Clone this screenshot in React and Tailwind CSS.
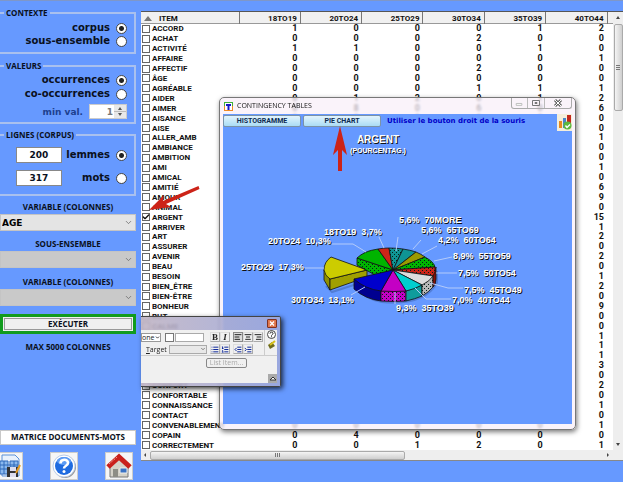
import React from 'react';
import clsx from 'clsx';
import { Check, ChevronDown, List, ListOrdered, AlignLeft, AlignCenter, AlignRight, IndentDecrease, IndentIncrease } from 'lucide-react';

const COLUMNS = ['18TO19', '20TO24', '25TO29', '30TO34', '35TO39', '40TO44'];

const ROWS = [
    ['ACCORD', 1, 0, 0, 0, 1, 2],
    ['ACHAT', 0, 0, 0, 2, 0, 0],
    ['ACTIVITÉ', 1, 1, 0, 0, 1, 0],
    ['AFFAIRE', 0, 0, 0, 0, 0, 1],
    ['AFFECTIF', 0, 0, 0, 2, 0, 0],
    ['ÂGE', 0, 0, 0, 0, 0, 0],
    ['AGRÉABLE', 0, 0, 0, 1, 1, 1],
    ['AIDER', 0, 1, 2, 0, 1, 2],
    ['AIMER', 0, 8, 0, 6, 0, 6],
    ['AISANCE', 0, 0, 0, 0, 0, 0],
    ['AISE', 0, 0, 0, 0, 0, 0],
    ['ALLER_AMB', 0, 0, 0, 0, 0, 1],
    ['AMBIANCE', 0, 0, 0, 0, 0, 0],
    ['AMBITION', 0, 0, 0, 0, 0, 0],
    ['AMI', 0, 0, 0, 0, 0, 1],
    ['AMICAL', 0, 0, 0, 0, 0, 0],
    ['AMITIÉ', 0, 0, 0, 0, 0, 6],
    ['AMOUR', 0, 0, 0, 0, 0, 9],
    ['ANIMAL', 0, 0, 0, 0, 0, 0],
    ['ARGENT', 0, 0, 0, 0, 0, 15],
    ['ARRIVER', 0, 0, 0, 0, 0, 1],
    ['ART', 0, 0, 0, 0, 0, 2],
    ['ASSURER', 0, 0, 0, 0, 0, 0],
    ['AVENIR', 0, 0, 0, 0, 0, 2],
    ['BEAU', 0, 0, 0, 0, 0, 0],
    ['BESOIN', 0, 0, 0, 0, 0, 1],
    ['BIEN_ÊTRE', 0, 0, 0, 0, 0, 2],
    ['BIEN-ÊTRE', 0, 0, 0, 0, 0, 0],
    ['BONHEUR', 0, 0, 0, 0, 0, 9],
    ['BUT', 0, 0, 0, 0, 0, 0],
    ['CALME', 0, 0, 0, 0, 0, 0],
    ['CHANCE', 0, 0, 0, 0, 0, 1],
    ['CHOIX', 0, 0, 0, 0, 0, 1],
    ['COEUR', 0, 0, 0, 0, 0, 1],
    ['COMPLET', 0, 0, 0, 0, 0, 3],
    ['COMPTER', 0, 0, 0, 0, 0, 0],
    ['CONFORT', 0, 0, 0, 0, 0, 2],
    ['CONFORTABLE', 0, 0, 0, 0, 0, 0],
    ['CONNAISSANCE', 0, 0, 0, 0, 0, 1],
    ['CONTACT', 0, 0, 0, 0, 0, 0],
    ['CONVENABLEMENT', 0, 0, 0, 0, 0, 1],
    ['COPAIN', 0, 4, 0, 0, 0, 0],
    ['CORRECTEMENT', 0, 0, 1, 2, 0, 1],
];

const PIE_LABELS = [
    [324, 235, '18TO19', '3,7%'],
    [268, 244, '20TO24', '10,3%'],
    [241, 270, '25TO29', '17,3%'],
    [291, 303, '30TO34', '13,1%'],
    [399, 223, '5,6%', '70MORE'],
    [421, 233, '5,6%', '65TO69'],
    [438, 243, '4,2%', '60TO64'],
    [453, 259, '8,9%', '55TO59'],
    [458, 276, '7,5%', '50TO54'],
    [464, 293, '7,5%', '45TO49'],
    [452, 303, '7,0%', '40TO44'],
    [396, 311, '9,3%', '35TO39'],
];

const Group = ({ title, children, className }) => (
    <fieldset className={clsx('min-w-0 border-2 border-l-0 border-[#a9c0ee] pr-[7px]', className)}>
        <legend className="ml-[4px] px-[2px] font-['Open_Sans'] text-[8px] leading-[10px]">{title}</legend>
        {children}
    </fieldset>
);

const Choice = ({ label, name, checked }) => (
    <label className="flex items-center justify-end gap-[6px] text-[10px] leading-[12px]">
        {label}
        <input
            type="radio"
            name={name}
            defaultChecked={checked}
            className="size-[11px] appearance-none rounded-full border border-[#444] bg-white checked:bg-[radial-gradient(#222_0_2px,#fff_3px)]"
        />
    </label>
);

const Combo = ({ id, label, value, className }) => (
    <div className={className}>
        <label htmlFor={id} className="block text-center font-['Open_Sans'] text-[8px] leading-[14px]">{label}</label>
        <div className="grid items-center">
            <select
                id={id}
                disabled={!value}
                className="col-start-1 row-start-1 h-[17px] w-full appearance-none border border-[#c4c4c4] bg-[#e4e4e4] pl-[1px] text-[9px] leading-[12px] font-bold text-black disabled:bg-[#c9c9c9]"
            >
                <option>{value}</option>
            </select>
            <ChevronDown size={9} className="pointer-events-none col-start-1 row-start-1 mr-[3px] justify-self-end text-[#666]" />
        </div>
    </div>
);

const Sidebar = () => (
    <aside className="flex w-[141px] shrink-0 flex-col pt-[7px] pr-[5px] font-['DejaVu_Sans',sans-serif] font-bold text-[#0a1020]">
        <Group title="CONTEXTE" className="h-[46px]">
            <div className="flex flex-col gap-[1px] pt-[4px]">
                <Choice name="contexte" label="corpus" checked />
                <Choice name="contexte" label="sous-ensemble" />
            </div>
        </Group>
        <Group title="VALEURS" className="mt-[7px] h-[63px]">
            <div className="flex flex-col gap-[2px] pt-[3px]">
                <Choice name="valeurs" label="occurrences" checked />
                <Choice name="valeurs" label="co-occurrences" />
                <label className="flex items-center justify-end gap-[6px] pt-[2px] text-[9px] leading-[12px] text-[#1d3f8f]">
                    min val.
                    <span className="flex h-[15px] w-[38px] border border-[#ccc] bg-white">
                        <input type="text" defaultValue="1" className="w-[23px] text-right text-[9px] text-[#777]" />
                        <svg viewBox="0 0 12 13" className="ml-auto h-[13px] w-[12px] bg-[#e8e8e8]">
                            <path d="M4 5h4L6 2zM4 8h4l-2 3z" fill="#555" />
                            <path d="M0 6.5h12" stroke="#bbb" />
                        </svg>
                    </span>
                </label>
            </div>
        </Group>
        <Group title="LIGNES (CORPUS)" className="mt-[6px] h-[66px]">
            <div className="flex flex-col gap-[7px] pt-[7px] pl-[16px]">
                <div className="flex items-center justify-between">
                    <input aria-label="Nombre de lemmes" defaultValue="200" className="h-[16px] w-[46px] border border-[#888] bg-white text-center text-[9px]" />
                    <Choice name="lignes" label="lemmes" checked />
                </div>
                <div className="flex items-center justify-between">
                    <input aria-label="Nombre de mots" defaultValue="317" className="h-[16px] w-[46px] border border-[#888] bg-white text-center text-[9px]" />
                    <Choice name="lignes" label="mots" />
                </div>
            </div>
        </Group>
        <Combo id="variable1" label="VARIABLE (COLONNES)" value="AGE" className="mt-[4px]" />
        <Combo id="subset" label="SOUS-ENSEMBLE" className="mt-[6px]" />
        <Combo id="variable2" label="VARIABLE (COLONNES)" className="mt-[7px]" />
        <button className="mt-[8px] h-[20px] border-[3px] border-[#129b1e] bg-[#f0f0f0] font-['Open_Sans'] text-[8px] leading-[12px] outline-1 -outline-offset-5 outline-[#999]">
            EXÉCUTER
        </button>
        <p className="mt-[7px] text-center font-['Open_Sans'] text-[8px] leading-[12px]">MAX 5000 COLONNES</p>
        <div className="mt-auto pb-[2px]">
            <button className="h-[15px] w-full border border-[#c8c8c8] bg-white font-['Open_Sans'] text-[8px] leading-[12px]">MATRICE DOCUMENTS-MOTS</button>
            <div className="mt-[5px] flex justify-between pr-[3px]">
                <button aria-label="Enregistrer" className="h-[28px] w-[23px] border border-l-0 border-[#ccc] bg-[#f6f6f6]">
                    <svg viewBox="0 0 22 26" className="size-full">
                        <path d="M2 2h13l4 4v17H2z" fill="#e9f2fd" stroke="#5b91d8" />
                        <path d="M0 8h8v13H0zM10 8h8v6h-8z" fill="#8bb9ee" stroke="#2f68b8" />
                        <path d="M0 12h18M0 16h12M4 8v13M14 8v6" stroke="#2f68b8" />
                        <path d="M7 14h11v10H7z" fill="#333" />
                        <path d="M10 14h6v4h-6zM10 20h6v4h-6z" fill="#dde" />
                        <path d="M20 12l-4 8" stroke="#e79b22" strokeWidth="2" />
                    </svg>
                </button>
                <button aria-label="Aide" className="size-[28px] border border-[#ccc] bg-[#f6f6f6]">
                    <svg viewBox="0 0 26 26" className="size-full">
                        <circle cx="14" cy="14" r="11" fill="#999" />
                        <circle cx="13" cy="13" r="11" fill="#fff" stroke="#b8cbe8" />
                        <circle cx="13" cy="13" r="9" fill="#1f6be0" />
                        <ellipse cx="13" cy="8" rx="7" ry="4" fill="#5c9cf5" />
                        <path d="M9.500 10.500c0-5 7.500-5 7.500-.5 0 3-4 2.500-4 5.500" fill="none" stroke="#fff" strokeWidth="2.600" />
                        <circle cx="13" cy="18.500" r="1.500" fill="#fff" />
                    </svg>
                </button>
                <button aria-label="Accueil" className="size-[28px] border border-[#ccc] bg-[#f6f6f6]">
                    <svg viewBox="0 0 26 26" className="size-full">
                        <path d="M4 13l9-8 9 8v11H4z" fill="#d5d2c8" stroke="#777" />
                        <path d="M7 16h5v8H7z" fill="#8d8d85" />
                        <path d="M14 15h7v5h-7z" fill="#3a72c4" stroke="#eee" />
                        <path d="M2 14L13 4l11 10" fill="none" stroke="#c9201c" strokeWidth="5" />
                        <path d="M3 11l8-7" stroke="#f19b8e" strokeDasharray="2 1" />
                    </svg>
                </button>
            </div>
        </div>
    </aside>
);

const Grid = () => (
    <main className="flex min-w-0 flex-1 flex-col pt-[10px] pb-[21px] font-[Roboto,sans-serif] font-bold">
        <div className="flex min-h-0 flex-1 border-t border-[#555] bg-white">
            <table className="h-full min-w-0 flex-1 table-fixed border-collapse text-[9px] leading-[9px] text-[#111]">
                <colgroup>
                    <col className="w-[98px]" />
                    {COLUMNS.map((c) => <col key={c} />)}
                    <col className="w-[6px]" />
                </colgroup>
                <thead>
                    <tr className="h-[12px] bg-[#f0f0f0] text-right text-[8px] shadow-[inset_0_-1px_#999]">
                        <th className="border-r border-[#777] p-0 text-left">
                            <span className="flex items-center gap-[7px] pl-[3px]">
                                <svg viewBox="0 0 8 5" className="h-[5px] w-[8px]"><path d="M0 5h8L4 0z" fill="#777" /></svg>
                                ITEM
                            </span>
                        </th>
                        {COLUMNS.map((c) => <th key={c} className="border-r border-[#777] p-0 pr-[3px]">{c}</th>)}
                        <th className="p-0" />
                    </tr>
                </thead>
                <tbody>
                    {ROWS.map(([item, ...values]) => (
                        <tr key={item}>
                            <td className="p-0">
                                <label className="flex items-center gap-[2px] pl-[1px] text-[8px] whitespace-nowrap">
                                    <span className="grid size-[8px] shrink-0">
                                        <input
                                            type="checkbox"
                                            defaultChecked={item === 'ARGENT'}
                                            className="peer col-start-1 row-start-1 size-[8px] appearance-none border border-[#666] bg-white"
                                        />
                                        <Check size={8} strokeWidth={4} className="invisible col-start-1 row-start-1 peer-checked:visible" />
                                    </span>
                                    {item}
                                </label>
                            </td>
                            {values.map((v, i) => <td key={COLUMNS[i]} className="p-0 pr-[3px] text-right">{v}</td>)}
                            <td className="p-0" />
                        </tr>
                    ))}
                </tbody>
            </table>
            <div className="flex w-[10px] shrink-0 flex-col items-center bg-[#eee]">
                <svg viewBox="0 0 10 12" className="h-[12px] w-[10px]"><path d="M3 7h4L5 4z" fill="#444" /></svg>
                <div className="flex h-[87px] w-[9px] items-center justify-center rounded-xs border border-[#aaa] bg-linear-to-r from-[#f4f4f4] to-[#cfcfcf]">
                    <svg viewBox="0 0 4 5" className="h-[5px] w-[4px]"><path d="M0 .5h4M0 2.500h4M0 4.500h4" stroke="#777" /></svg>
                </div>
                <svg viewBox="0 0 10 12" className="mt-auto h-[12px] w-[10px]"><path d="M3 5h4L5 8z" fill="#444" /></svg>
            </div>
        </div>
        <div className="flex h-[11px] shrink-0 items-center border-b border-[#888] bg-[#eee]">
            <svg viewBox="0 0 9 10" className="h-[10px] w-[9px]"><path d="M5 3v4L3 5z" fill="#444" /></svg>
            <div className="flex h-[9px] w-[53%] items-center justify-center rounded-xs border border-[#aaa] bg-linear-to-b from-[#f4f4f4] to-[#cfcfcf]">
                <svg viewBox="0 0 5 4" className="h-[4px] w-[5px]"><path d="M.5 0v4M2.500 0v4M4.500 0v4" stroke="#777" /></svg>
            </div>
            <svg viewBox="0 0 9 10" className="mr-[11px] ml-auto h-[10px] w-[9px]"><path d="M4 3v4l2-2z" fill="#444" /></svg>
        </div>
    </main>
);

const Dots = ({ id, fill }) => (
    <pattern id={id} width="4" height="4" patternUnits="userSpaceOnUse">
        <rect width="4" height="4" fill={fill} />
        <path d="M0 0h1v1H0zM2 2h1v1H2z" fill="#052018" />
    </pattern>
);

const PieChart = () => (
    <svg viewBox="223 131 349 293" className="block w-full flex-1" role="img" aria-label="ARGENT">
        <defs>
            <Dots id="dotGreen" fill="#00b400" />
            <Dots id="dotTeal" fill="#0f9494" />
            <Dots id="dotRed" fill="#cc2418" />
            <Dots id="dotPink" fill="#c400c4" />
            <Dots id="dotGray" fill="#b8b8b8" />
        </defs>
        <path d="M357 264Q354 275 354 287Q366 301 382 303Q425 307 438 283V271z" fill="#3e62ae" opacity=".5" />
        <path d="M326 286l6 6 37-12" fill="none" stroke="#3e62ae" strokeWidth="2" opacity=".5" />
        <g stroke="#111" strokeWidth=".8" strokeLinejoin="round">
            {/* exploded slice */}
            <path d="M324 270V280L330 290V279z" fill="#8f8f00" />
            <path d="M330 279V290L367 277V270z" fill="#a0a000" />
            <path d="M367 270L331 257Q324 262 324 270Q325 276 330 279z" fill="#cccc00" />
            {/* side walls */}
            <path d="M357 258V265L375 275L393 270z" fill="url(#dotGreen)" />
            <path d="M354 279V289Q365 299 381 301V291z" fill="#000090" />
            <path d="M381 291V301Q394 302 406 301V291z" fill="url(#dotPink)" />
            <path d="M406 291V301Q415 299 422 296V285z" fill="#0f9c9c" />
            <path d="M422 285V296Q429 292 433 287V276z" fill="url(#dotGray)" />
            <path d="M433 276V287Q436 284 436 279V267z" fill="#881008" />
            {/* slices */}
            <path d="M393 270L357 258Q364 251 378 249z" fill="#00b400" />
            <path d="M393 270L378 249Q383 248 389 248z" fill="#cc2418" />
            <path d="M393 270L389 248Q396 248 403 249z" fill="url(#dotTeal)" />
            <path d="M393 270L403 249Q410 250 416 252z" fill="#0f9494" />
            <path d="M393 270L416 252Q421 254 425 257z" fill="#9a9a00" />
            <path d="M393 270L425 257Q434 262 435 267z" fill="url(#dotGreen)" />
            <path d="M393 270L435 267Q436 272 433 276z" fill="url(#dotRed)" />
            <path d="M393 270L433 276Q430 281 422 285z" fill="#dcdcdc" />
            <path d="M393 270L422 285Q415 289 406 291z" fill="#00cfcf" />
            <path d="M393 270L406 291Q394 292 381 291z" fill="#c400c4" />
            <path d="M393 270L381 291Q365 289 354 279z" fill="#0000cc" />
        </g>
        <g fill="none" stroke="#b4cbfa">
            <path d="M327 244h26l13 8M301 268h23M351 295l14-8M379 237l5 11M398 237l-2 14M421 240l-8 9M437 246l-15 8M452 257l-18 4M457 273h-21M463 288h-15l-18-5M451 299h-25l-11-11M395 304v-12" />
        </g>
        <g className="fill-white font-['Liberation_Sans'] text-[9px] font-bold [text-shadow:1px_1px_#111]">
            <text x="378" y="143" textAnchor="middle" className="text-[10px]">ARGENT</text>
            <text x="378" y="153" textAnchor="middle" className="text-[7px]">(POURCENTAG.)</text>
            {PIE_LABELS.map(([x, y, first, second]) => (
                <text key={x} x={x} y={y}>{`${first}\u00a0\u00a0${second}`}</text>
            ))}
        </g>
    </svg>
);

const ContingencyWindow = () => (
    <section className="absolute top-[96px] left-[219px] flex h-[333px] w-[357px] flex-col rounded-[5px] border border-[#777] bg-[#f8eff8]/75 px-[3px] pb-[5px] shadow-[1px_2px_5px_#0008] backdrop-blur-[1px]">
        <header className="flex h-[16px] items-center gap-[4px] pl-[1px]">
            <svg viewBox="0 0 9 9" className="size-[9px]">
                <path d="M0 0h9v9H0z" fill="#3faf3a" />
                <path d="M0 4h9v5H0z" fill="#f08a24" />
                <path d="M1 1h7v7H1z" fill="#fff" />
                <path d="M2 2h5v2H5.500v4h-2V4H2z" fill="#1717c8" />
            </svg>
            <h1 className="font-['Open_Sans'] text-[7px] leading-[12px] text-[#111]">CONTINGENCY TABLES</h1>
            <div className="ml-auto flex h-[11px] self-start overflow-hidden rounded-b-[3px] border border-t-0 border-[#aaa] text-[#666]">
                <button aria-label="Réduire" className="w-[16px] border-r border-[#bbb]">
                    <svg viewBox="0 0 16 10" className="h-[10px] w-full"><path d="M4.500 5.500h6v2h-6z" fill="#fff" stroke="#bbb" /></svg>
                </button>
                <button aria-label="Agrandir" className="w-[17px] border-r border-[#bbb]">
                    <svg viewBox="0 0 16 10" className="h-[10px] w-full"><path d="M4.500 2.500h7v5h-7zM7 4.500h2v1H7z" fill="none" stroke="#777" /></svg>
                </button>
                <button aria-label="Fermer" className="w-[26px]">
                    <svg viewBox="0 0 26 10" className="h-[10px] w-full">
                        <path d="M10 2l6 6M16 2l-6 6" stroke="#666" strokeWidth="3" />
                        <path d="M10 2l6 6M16 2l-6 6" stroke="#fff" />
                    </svg>
                </button>
            </div>
        </header>
        <div className="flex min-h-0 flex-1 flex-col bg-[#6699ff]">
            <div className="flex h-[17px] items-start font-[Roboto] text-[7px] leading-[10px] font-bold">
                <button className="mt-[1px] h-[12px] w-[78px] rounded-[2px] border border-[#7b93a8] bg-linear-to-b from-[#e2f4fd] to-[#aadcf5] text-[#0c2a50]">HISTOGRAMME</button>
                <button className="mt-[1px] ml-[2px] h-[12px] w-[78px] rounded-[2px] border border-[#7b93a8] bg-linear-to-b from-[#e2f4fd] to-[#aadcf5] text-[#0c2a50]">PIE CHART</button>
                <p className="ml-[6px] pt-[2px] font-['DejaVu_Sans'] text-[7px] whitespace-nowrap text-[#0000c8]">Utiliser le bouton droit de la souris</p>
                <button aria-label="Options du graphique" className="ml-auto h-[17px] w-[15px] bg-[#f5eedb]">
                    <svg viewBox="0 0 15 17" className="size-full">
                        <path d="M2 7h3v7H2z" fill="#e88a1e" />
                        <path d="M6 4h3v10H6z" fill="#4c86c8" />
                        <path d="M10 1h4v8h-4z" fill="#c4281c" />
                        <circle cx="10.500" cy="11.500" r="4" fill="#5cb83c" />
                        <path d="M8.500 11.500l1.500 2 3-3" fill="none" stroke="#fff" strokeWidth="1.400" />
                    </svg>
                </button>
            </div>
            <PieChart />
        </div>
    </section>
);

const ToolButton = ({ label, children, pressed }) => (
    <button aria-label={label} className={clsx('flex size-[10px] items-center justify-center border', pressed ? 'border-[#888] bg-[#ddd]' : 'border-[#ddd] border-r-[#aaa] border-b-[#aaa]')}>
        {children}
    </button>
);

const EditorWindow = () => (
    <section className="absolute top-[315px] left-[141px] flex h-[71px] w-[140px] flex-col overflow-hidden rounded-r-[2px] border border-l-0 border-[#444] bg-linear-to-r from-[#c0b4c4]/90 to-[#9fa9dc]/90 pr-[3px] pb-[3px] font-['Open_Sans'] text-[7px] leading-[9px] text-[#222] shadow-[2px_2px_5px_#000b] backdrop-blur-[1px]">
        <header className="flex h-[13px] items-center justify-end">
            <button aria-label="Fermer" className="flex h-[9px] w-[10px] items-center justify-center rounded-[1px] border border-[#803020] bg-[#e0764a]">
                <svg viewBox="0 0 6 5" className="h-[5px] w-[6px]"><path d="M1 .5l4 4M5 .5l-4 4" stroke="#fff" strokeWidth="1.300" /></svg>
            </button>
        </header>
        <div className="flex flex-1 flex-col bg-[#f0f0f0]">
            <div className="flex flex-1">
                <div className="flex flex-1 flex-col gap-[2px] border-r border-[#ccc] pt-[2px]">
                    <div className="flex h-[10px] items-center">
                        <button className="flex h-[9px] w-[20px] items-center border border-[#999] bg-white">
                            one<ChevronDown size={5} strokeWidth={4} className="ml-auto" />
                        </button>
                        <button aria-label="Couleur" className="ml-[4px] size-[9px] border border-[#777] bg-white" />
                        <input aria-label="Lien" className="ml-[1px] h-[9px] w-[29px] border border-[#aaa] bg-white" />
                        <div className="ml-auto flex pr-[1px]">
                            <ToolButton label="Gras"><b className="font-['Liberation_Serif'] text-[9px]">B</b></ToolButton>
                            <ToolButton label="Italique"><i className="font-['Liberation_Serif'] text-[9px] font-bold">I</i></ToolButton>
                            <span className="ml-[3px] flex">
                                <ToolButton label="Gauche" pressed><AlignLeft size={8} strokeWidth={3} /></ToolButton>
                                <ToolButton label="Centre"><AlignCenter size={8} strokeWidth={3} /></ToolButton>
                                <ToolButton label="Droite"><AlignRight size={8} strokeWidth={3} /></ToolButton>
                            </span>
                        </div>
                    </div>
                    <div className="flex h-[10px] items-center">
                        <label htmlFor="target" className="ml-[5px]"><u>T</u>arget</label>
                        <div className="ml-[2px] grid items-center">
                            <select id="target" disabled className="col-start-1 row-start-1 h-[9px] w-[38px] appearance-none border border-[#aaa] bg-[#e8e8e8]" />
                            <ChevronDown size={6} className="col-start-1 row-start-1 mr-[1px] justify-self-end" />
                        </div>
                        <div className="ml-[3px] flex text-[#102a9a]">
                            <ToolButton label="Liste"><List size={9} strokeWidth={3} /></ToolButton>
                            <ToolButton label="Liste numérotée"><ListOrdered size={9} strokeWidth={3} /></ToolButton>
                            <span className="ml-[3px] flex">
                                <ToolButton label="Désindenter"><IndentDecrease size={9} strokeWidth={3} /></ToolButton>
                                <ToolButton label="Indenter"><IndentIncrease size={9} strokeWidth={3} /></ToolButton>
                            </span>
                        </div>
                    </div>
                </div>
                <div className="flex w-[12px] flex-col items-center gap-[1px]">
                    <svg viewBox="0 0 9 9" className="size-[9px]">
                        <circle cx="4.500" cy="4.500" r="4" fill="#fff" stroke="#444" />
                        <path d="M3 3.600c0-2 3-2 3 0 0 1-1.500 1-1.500 2M4.500 6.300v1" fill="none" stroke="#222" />
                    </svg>
                    <svg viewBox="0 0 9 9" className="size-[9px]">
                        <path d="M1 5l4-3 3 4-5 3z" fill="#6d6a1c" />
                        <path d="M3 5l5-4" stroke="#d9c21c" strokeWidth="2" />
                    </svg>
                </div>
            </div>
            <div className="flex h-[28px] border-t border-[#ccc]">
                <button className="mt-[2px] ml-[65px] h-[10px] w-[41px] rounded-[2px] border border-[#888] leading-[8px] text-[#aaa]">List Item...</button>
                <button aria-label="Réduire le panneau" className="mt-auto ml-auto flex size-[9px] items-center justify-center bg-[#aaa]">
                    <svg viewBox="0 0 6 4" className="h-[4px] w-[6px]"><path d="M0 3l3-3 3 3z" fill="#fff" stroke="#333" /></svg>
                </button>
            </div>
        </div>
    </section>
);

const Arrows = () => (
    <>
        <svg viewBox="0 0 52 26" className="pointer-events-none absolute top-[184px] left-[148px] h-[26px] w-[52px]">
            <path d="M1 25L16 10l-1 6L50.500 1l1 3L18 19l5 3z" fill="#cc2318" />
        </svg>
        <svg viewBox="0 0 16 46" className="pointer-events-none absolute top-[125px] left-[332px] h-[46px] w-[16px]">
            <path d="M8 0l7 29-5-5v21H6V24l-5 5z" fill="#cc2318" />
        </svg>
    </>
);

export default function App() {
    return (
        <div className="relative flex h-screen w-full overflow-hidden border-t border-[#7f97c8] bg-[#6699ff]">
            <Sidebar />
            <Grid />
            <ContingencyWindow />
            <EditorWindow />
            <Arrows />
        </div>
    );
}
